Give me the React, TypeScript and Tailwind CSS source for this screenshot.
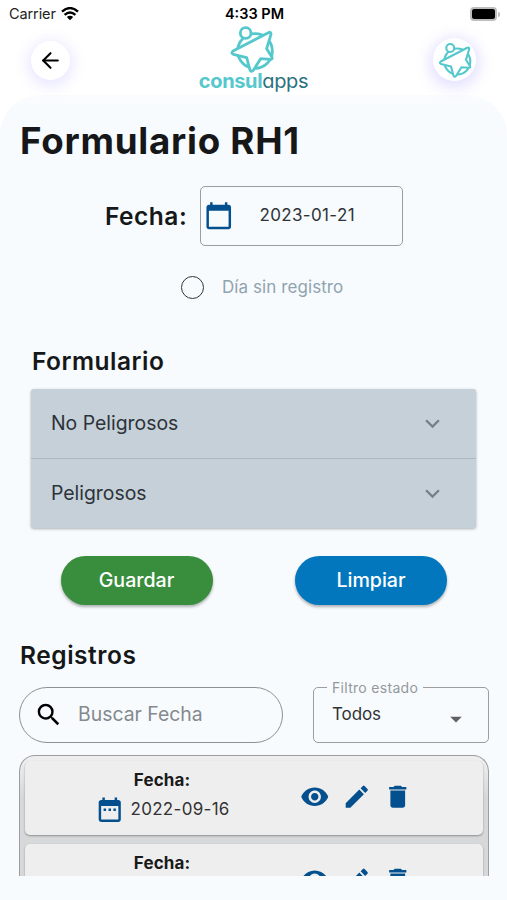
import React from "react";
import { ArrowLeft } from "lucide-react";
import {
  MdArrowDropDown,
  MdCalendarToday,
  MdDateRange,
  MdDelete,
  MdEdit,
  MdExpandMore,
  MdRemoveRedEye,
  MdSearch,
} from "react-icons/md";

const sections = ["No Peligrosos", "Peligrosos"];
const records = [{ id: 1, date: "2022-09-16" }, { id: 2 }];

const LogoMark: React.FC<{ className?: string }> = ({ className }) => (
  <svg viewBox="0 0 130 144" className={className} fill="none">
    <g stroke="#55c8cd" strokeWidth="8.5" strokeLinejoin="round">
      <circle cx="74" cy="78" r="52" />
      <path
        fill="#fff"
        d="M114 23 Q122 19 122 28 L109 71 L125 97 Q127 103 120 103 L91 101 L69 136 Q63 142 59 135 L49 98 L9 88 Q1 84 8 78 Z"
      />
      <circle cx="46" cy="24" r="16" fill="#fff" />
    </g>
  </svg>
);

const StatusBar = () => (
  <div className="grid h-7 grid-cols-3 items-center pl-[9px] pr-[7px] text-[14.5px] text-[#222]">
    <div className="flex items-center gap-[5px]">
      <span className="tracking-[-0.1px]">Carrier</span>
      <svg viewBox="0 0 18 14" className="h-[14px] w-[18px]" fill="none">
        <path
          d="M1 4.6 Q9 -2.4 17 4.6 M3.6 7.8 Q9 3.2 14.4 7.8"
          stroke="#000"
          strokeWidth="2.4"
        />
        <path d="M5.8 10 Q9 7.4 12.2 10 L9 13.2Z" fill="#000" />
      </svg>
    </div>
    <div className="text-center font-semibold text-black">4:33 PM</div>
    <div className="flex items-center justify-end gap-px">
      <div className="h-[14px] w-[27px] rounded-[4px] border-2 border-[#bdbdbd]">
        <div className="h-full rounded-[2px] bg-black" />
      </div>
      <div className="h-[5px] w-[2px] rounded-r-full bg-[#bdbdbd]" />
    </div>
  </div>
);

const RecordCard: React.FC<{ date?: string }> = ({ date }) => (
  <div className="flex h-[74px] shrink-0 rounded-[5px] bg-[#eeeeee] shadow-[0_1px_2px_rgba(0,0,0,0.35)]">
    <div className="ml-[70px] mt-[6px] w-[134px]">
      <div className="text-center text-[17px] font-bold leading-[26px] tracking-[0.1px] text-[#1a1a1a]">
        Fecha:
      </div>
      {date && (
        <div className="mt-[2px] flex items-center gap-[6px] whitespace-nowrap">
          <MdDateRange className="size-[29.5px] shrink-0 text-[#04508f]" />
          <span className="text-[17px] tracking-[0.3px] text-[#333]">
            {date}
          </span>
        </div>
      )}
    </div>
    <div className="ml-[71px] mt-[21px] flex gap-[12px] text-[#04508f]">
      <MdRemoveRedEye className="size-[29.5px]" />
      <MdEdit className="size-[29.5px]" />
      <MdDelete className="size-[29.5px]" />
    </div>
  </div>
);

export default function App() {
  return (
    <div className="h-[900px] w-[507px] overflow-hidden bg-white font-['Inter',sans-serif] text-[#151719]">
      <StatusBar />

      {/* Header */}
      <header className="flex h-[67px] justify-between pl-[31px] pr-[31px]">
        <button className="mt-[13px] flex size-[39px] items-center justify-center rounded-full bg-white shadow-[0_3px_14px_3px_rgba(150,140,255,0.22)]">
          <ArrowLeft className="size-[25px] text-black" strokeWidth={2} />
        </button>
        <div className="-mt-[3px] ml-[4px] flex flex-col items-center">
          <LogoMark className="mr-[4px] h-[48px] w-[44px]" />
          <div className="-mt-[4px] text-[20px] leading-[24px] tracking-[-0.35px] [font-feature-settings:'cv11']">
            <span className="font-bold text-[#55c8cd]">consul</span>
            <span className="text-[#2c7180]">apps</span>
          </div>
        </div>
        <button className="mt-[10px] flex size-[43px] items-center justify-center rounded-full bg-white shadow-[0_3px_14px_4px_rgba(150,140,255,0.26)]">
          <LogoMark className="h-[36px] w-[34px]" />
        </button>
      </header>

      <main className="h-[805px] rounded-t-[40px] bg-[#f7fbfe] bg-linear-to-b from-[#fafcfe] to-[#f7fbfe] to-[24px] pt-[22px]">
        <h1 className="ml-[20px] text-[36.7px] font-bold leading-[48px] tracking-[0.75px]">
          Formulario RH1
        </h1>

        {/* Fecha del formulario */}
        <div className="ml-[105px] mt-[21px] flex items-center">
          <span className="w-[95px] text-[24.5px] font-semibold tracking-[0.5px]">
            Fecha:
          </span>
          <div className="flex h-[60px] w-[203px] items-center rounded-[5px] border border-[#9b9d9f] pl-[3px]">
            <MdCalendarToday className="size-[29.5px] text-[#04508f]" />
            <span className="ml-[26px] mb-px text-[17px] tracking-[0.35px] text-[#303336]">
              2023-01-21
            </span>
          </div>
        </div>

        <label className="ml-[181px] mt-[28px] flex h-[26px] items-center">
          <span className="size-[23px] rounded-full border-[1.5px] border-[#333]" />
          <span className="ml-[18px] mt-px text-[17px] tracking-[0.08px] text-[#90a4ae]">
            Día sin registro
          </span>
        </label>

        <h2 className="ml-[32px] mt-[45px] text-[24.5px] font-semibold leading-[32px] tracking-[0.5px]">
          Formulario
        </h2>
        <div className="ml-[31px] mt-[12px] w-[445px] divide-y divide-[#adb9bf] rounded-[3px] bg-[#c6d0d8] shadow-[0_1px_3px_rgba(0,0,0,0.3)]">
          {sections.map((name) => (
            <div
              key={name}
              className="flex h-[69.5px] items-center justify-between pl-[20px] pr-[29px]"
            >
              <span className="text-[19.4px] text-[#2c3339]">{name}</span>
              <MdExpandMore className="size-[29px] text-[#75818a]" />
            </div>
          ))}
        </div>

        <div className="ml-[60.5px] mt-[28px] flex gap-[82.5px] text-[19.6px] font-medium text-white">
          <button className="h-[49px] w-[152px] rounded-full bg-[#388e3c] shadow-[0_2px_3px_rgba(0,0,0,0.3)]">
            Guardar
          </button>
          <button className="h-[49px] w-[152px] rounded-full bg-[#0277bd] shadow-[0_2px_3px_rgba(0,0,0,0.3)]">
            Limpiar
          </button>
        </div>

        <h2 className="ml-[20px] mt-[34px] text-[24.5px] font-semibold leading-[32px] tracking-[0.55px]">
          Registros
        </h2>

        {/* Filtros */}
        <div className="ml-[19px] mt-[16px] flex gap-[30px]">
          <div className="flex h-[56px] w-[264px] items-center rounded-[28px] border border-[#8d9093] pl-[14px]">
            <MdSearch className="size-[29.5px] text-black" />
            <span className="ml-[14.5px] text-[19.4px] text-[#85898d]">
              Buscar Fecha
            </span>
          </div>
          <div className="relative flex h-[56px] w-[176px] items-center justify-between rounded-[5px] border border-[#9b9d9f] pl-[18px] pr-[18px]">
            <span className="absolute -top-[10px] left-[13px] bg-[#f7fbfe] px-[5px] text-[14px] leading-[20px] tracking-[0.3px] text-[#94989c]">
              Filtro estado
            </span>
            <span className="text-[17px] tracking-[-0.1px] text-[#303336]">
              Todos
            </span>
            <MdArrowDropDown className="mt-[8px] size-[28px] text-[#616161]" />
          </div>
        </div>

        {/* Registros */}
        <div className="ml-[19px] mt-[12px] h-[121px] w-[470px] overflow-hidden rounded-t-[16px] border border-b-0 border-[#9b9d9f] bg-linear-to-b from-[#eeeeee] from-[6px] to-[#d6d8da] to-[40px] px-[5px] pt-[5px]">
          <div className="flex flex-col gap-[9px]">
            {records.map((record) => (
              <RecordCard key={record.id} date={record.date} />
            ))}
          </div>
        </div>
      </main>
    </div>
  );
}
